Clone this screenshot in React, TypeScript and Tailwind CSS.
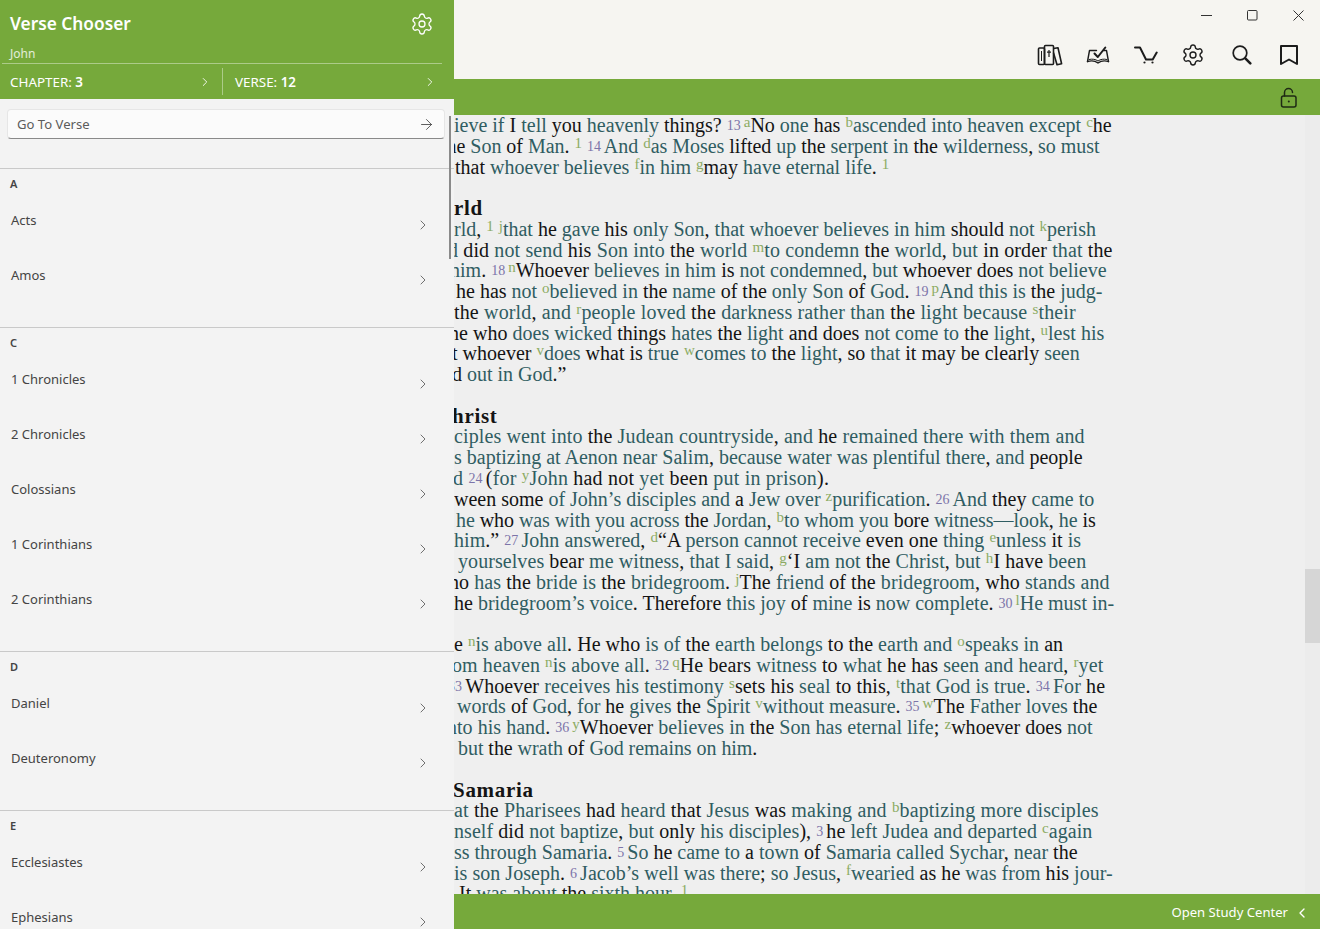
import { Settings, ChevronRight, ChevronLeft, ArrowRight } from "lucide-react";

const ui = "font-['Noto_Sans','Open_Sans',sans-serif]";

const groups = [
  { letter: "A", books: ["Acts", "Amos"] },
  { letter: "C", books: ["1 Chronicles", "2 Chronicles", "Colossians", "1 Corinthians", "2 Corinthians"] },
  { letter: "D", books: ["Daniel", "Deuteronomy"] },
  { letter: "E", books: ["Ecclesiastes", "Ephesians", "Esther"] },
];

// {teal}  ^note-letter  #verse#
const lines: { t: string; c?: string; h?: boolean }[] = [
  { t: "{ieve if} I {tell} you {heavenly} things? #13#^aNo {one} has ^b{ascended into heaven except} ^che" },
  { t: "the{ Son} of {Man}. ^1 #14#{And} ^d{as Moses} lifted {up} the {serpent in} the {wilderness}, {so must}", c: "ml-[-13px] tracking-[-0.03px]" },
  { t: "that {whoever believes} ^f{in him} ^gmay{ have eternal life}. ^1", c: "ml-[1px]" },
  { t: "" },
  { t: "rld", h: true },
  { t: "{rld}, ^1 ^j{that} he {gave} his {only Son}, {that whoever believes in him} should {not} ^k{perish}" },
  { t: "{d} did {not send} his {Son into} the {world} ^m{to condemn} the {world}, {but} in order {that} the", c: "ml-[-6px] tracking-[0.13px]" },
  { t: "{him}. #18#^nWhoever {believes in him} is {not condemned}, {but} whoever does {not believe}", c: "ml-[-4px]" },
  { t: "he has {not} ^o{believed in} the {name} of the {only Son} of {God}. #19#^p{And this is} the {judg-}", c: "ml-[2px]" },
  { t: "the {world}, {and} ^r{people loved} the {darkness rather than} the {light because} ^s{their}", c: "tracking-[0.15px]" },
  { t: "he who {does wicked} things {hates} the {light} and does {not come to} the {light}, ^u{lest his}", c: "ml-[-5px] tracking-[0.02px]" },
  { t: "t whoever ^v{does} what is {true} ^w{comes to} the {light}, so {that} it may be clearly {seen}", c: "ml-[-2px]" },
  { t: "d {out in God}.”", c: "ml-[-2px]" },
  { t: "" },
  { t: "hrist", h: true, c: "ml-[-2px]" },
  { t: "{ciples went into} the {Judean countryside}, {and} he {remained there with them and}", c: "tracking-[0.12px]" },
  { t: "{s baptizing at Aenon near Salim}, {because water was plentiful there}, {and} people" },
  { t: "{d} #24#({for} ^y{John} had not {yet} been {put in prison}).", c: "ml-[-1px] tracking-[0.2px]" },
  { t: "ween some {of John’s disciples and} a {Jew over} ^z{purification}. #26#{And} they {came to}" },
  { t: "{he} who {was with you across} the {Jordan}, ^b{to whom you} bore {witness—look}, {he} is", c: "ml-[2px] tracking-[-0.06px]" },
  { t: "{him}.” #27#{John answered}, ^d“A {person cannot receive} even one {thing} ^e{unless} it {is}", c: "tracking-[0.05px]" },
  { t: "{yourselves} bear {me witness}, {that I said}, ^g‘I {am not} the {Christ}, {but} ^hI have {been}", c: "ml-[4px] tracking-[0.07px]" },
  { t: "ho {has} the {bride is} the {bridegroom}. ^jThe {friend} of the {bridegroom}, who {stands and}", c: "ml-[-5px] tracking-[0.08px]" },
  { t: "he {bridegroom’s voice}. Therefore {this joy} of {mine} is {now complete}. #30#^l{He must in-}" },
  { t: "" },
  { t: "e ^n{is above all}. He who {is of} the {earth belongs} to the {earth and} ^o{speaks in} an", c: "tracking-[0.04px]" },
  { t: "{om heaven} ^n{is above all}. #32#^qHe bears {witness} to {what} he has {seen and heard}, ^r{yet}", c: "ml-[-2px] tracking-[0.09px]" },
  { t: "#33#Whoever {receives his testimony} ^ssets his {seal} to this, ^t{that God is true}. #34#{For} he", c: "ml-[-6px] tracking-[0.09px]" },
  { t: "{words} of {God}, {for} he {gives} the {Spirit} ^v{without measure}. #35#^wThe {Father loves} the", c: "ml-[3px]" },
  { t: "{nto his hand}. #36#^yWhoever {believes in} the {Son has eternal life}; ^zwhoever does {not}", c: "ml-[-7px] tracking-[0.03px]" },
  { t: "{but} the {wrath} of {God remains on him}.", c: "ml-[4px] tracking-[-0.05px]" },
  { t: "" },
  { t: "Samaria", h: true, c: "ml-[-1px]" },
  { t: "{at} the {Pharisees} had {heard} that {Jesus} was {making and} ^b{baptizing more disciples}", c: "tracking-[0.15px]" },
  { t: "{nself} did {not baptize}, {but} only {his disciples}), #3#he {left Judea and departed} ^c{again}", c: "tracking-[0.07px]" },
  { t: "{ss through Samaria}. #5#{So} he {came to} a {town} of {Samaria called Sychar}, {near} the" },
  { t: "{is son Joseph}. #6#{Jacob’s well was there}; {so Jesus}, ^f{wearied} as he {was from} his {jour-}", c: "tracking-[0.03px]" },
  { t: "It {was about} the {sixth hour}. ^1", c: "ml-[5px]" },
];

function Line({ t }: { t: string }) {
  const parts = t.match(/\{[^}]*\}|\^.|#[^#]+#|[^{^#]+/g) ?? [];
  return (
    <>
      {parts.map((p, i) => {
        if (p[0] === "{") return <span key={i} className="text-[#2f5d62]">{p.slice(1, -1)}</span>;
        if (p[0] === "^")
          return (
            <span key={i} className="relative top-[-5px] text-[15px] text-[#8bab62]">
              {p[1]}
            </span>
          );
        if (p[0] === "#")
          return (
            <span key={i} className="relative top-[-2px] mr-[3px] text-[14px] text-[#7c74a9]">
              {p.slice(1, -1)}
            </span>
          );
        return <span key={i}>{p}</span>;
      })}
    </>
  );
}

function BooksIcon() {
  return (
    <svg width="26" height="22" viewBox="0 0 26 22" fill="none" stroke="#1c1c1c" strokeWidth="1.6" strokeLinejoin="round">
      <rect x="1.5" y="4" width="6" height="16.5" rx="1" />
      <rect x="7.5" y="1.5" width="9" height="19" rx="1" />
      <path d="M16.5 4.5l4.5-.8 3.6 16-4.6 1-3.5-12" />
      <path d="M12 6v7M10 8.2h4" strokeWidth="1.2" />
      <path d="M4.5 7v10" strokeWidth="1" />
    </svg>
  );
}

function BookCheckIcon() {
  return (
    <svg width="24" height="18" viewBox="0 0 24 18" fill="none" stroke="#1c1c1c" strokeWidth="1.4" strokeLinejoin="round" strokeLinecap="round">
      <path d="M1.5 15.5L3.500 4.500h7" />
      <path d="M17.500 4.500h3l2 11" />
      <path d="M1.500 15.500c4-1.200 7.500-.8 10.500 1.500 3-2.300 6.500-2.700 10.500-1.500" />
      <path d="M3 13.500c3.500-.8 6.500-.3 9 1.500 2.500-1.800 5.500-2.300 9-1.500" strokeWidth="1" />
      <path d="M8.500 7.500l3.300 3.500 7.500-9.500" strokeWidth="2" />
    </svg>
  );
}

function CartIcon() {
  return (
    <svg width="24" height="18" viewBox="0 0 24 18" fill="none" stroke="#1c1c1c" strokeWidth="2" strokeLinecap="round" strokeLinejoin="round">
      <path d="M1 1.500h5l6 12h6.700l4-7" />
      <circle cx="10.500" cy="16.500" r="1.100" fill="#1c1c1c" stroke="none" />
      <circle cx="18.500" cy="16.500" r="1.100" fill="#1c1c1c" stroke="none" />
    </svg>
  );
}

function SearchIcon() {
  return (
    <svg width="20" height="20" viewBox="0 0 20 20" fill="none" stroke="#1c1c1c" strokeLinecap="round">
      <circle cx="8" cy="8" r="6.800" strokeWidth="1.700" />
      <path d="M13.300 13.300l5 5" strokeWidth="2.600" />
    </svg>
  );
}

function BookmarkIcon() {
  return (
    <svg width="18" height="20" viewBox="0 0 18 20" fill="none" stroke="#1c1c1c" strokeWidth="2" strokeLinejoin="round">
      <path d="M1 1h16v18l-8-4.500L1 19z" />
    </svg>
  );
}

function LockIcon() {
  return (
    <svg width="18" height="21" viewBox="0 0 18 21" fill="none" stroke="#1f2a14" strokeWidth="1.5" strokeLinecap="round">
      <rect x="1.500" y="9" width="14.500" height="11" rx="2" />
      <path d="M4.500 9V5.500a4 4 0 0 1 8 0" />
      <circle cx="8.800" cy="14.500" r="1" fill="#1f2a14" stroke="none" />
    </svg>
  );
}

function BookRow({ name }: { name: string }) {
  return (
    <div className="flex h-[55px] shrink-0 items-start justify-between pl-[11px] pr-[23px] pt-[9px]">
      <span className="text-[13px] leading-[18px] text-[#444]">{name}</span>
      <ChevronRight className="mt-[6px] h-4 w-4 text-[#555]" strokeWidth={1.25} />
    </div>
  );
}

function Sidebar() {
  return (
    <aside className={`relative flex h-full w-[454px] shrink-0 flex-col overflow-hidden bg-[#f3f3f3] ${ui}`}>
      <header className="h-[99px] shrink-0 bg-[#76a93b] text-white">
        <div className="flex h-[47px] items-center justify-between pl-[10px] pr-[20px]">
          <h1 className="text-[17.3px] font-semibold leading-none">Verse Chooser</h1>
          <Settings className="h-[24px] w-[24px]" strokeWidth={1.3} />
        </div>
        <p className="mt-[-2px] h-[18px] pl-[10px] text-[12px] leading-[17px] text-white/80">John</p>
        <div className="ml-[2px] mr-[12px] flex h-[36px] border-t border-white/40">
          <div className="my-[4px] flex w-[221px] items-center justify-between border-r border-white/40 pl-[8px] pr-[10px] pt-[1px] text-[13.4px]">
            <span>
              CHAPTER: <b className="font-semibold">3</b>
            </span>
            <ChevronRight className="h-[14px] w-[14px]" strokeWidth={1.5} />
          </div>
          <div className="my-[4px] flex flex-1 items-center justify-between pl-[12px] pr-[5px] pt-[1px] text-[13.4px]">
            <span>
              VERSE: <b className="font-semibold">12</b>
            </span>
            <ChevronRight className="h-[14px] w-[14px]" strokeWidth={1.5} />
          </div>
        </div>
      </header>
      <div className="ml-[7px] mr-[9px] mt-[10px] flex h-[30px] shrink-0 items-center justify-between rounded-[4px] border border-[#e6e6e6] border-b-[#8a8a8a] bg-[#fbfbfb] pl-[9px] pr-[9px] pt-[1px] text-[13.1px] text-[#5c5c5c]">
        <span>Go To Verse</span>
        <ArrowRight className="h-[17px] w-[17px] text-[#333]" strokeWidth={1.1} />
      </div>
      <div className="mt-[29px]">
        {groups.map((g) => (
          <section key={g.letter} className="border-t border-[#c9c9c9] pb-[15px]">
            <div className="h-[33px] pl-[10px] pt-[7px] text-[11px] font-semibold leading-[16px] text-[#444]">{g.letter}</div>
            <div className="flex flex-col">
              {g.books.map((b) => (
                <BookRow key={b} name={b} />
              ))}
            </div>
          </section>
        ))}
      </div>
      {/* list scrollbar */}
      <div className="absolute left-[449px] top-[116px] h-[143px] w-[2px] bg-[#8a8a8a]" />
    </aside>
  );
}

export default function App() {
  return (
    <div className="flex h-[929px] w-[1320px] overflow-hidden bg-[#f6f5f1]">
      <Sidebar />
      <main className="flex min-w-0 flex-1 flex-col">
        <div className="flex h-[30px] shrink-0 justify-end">
          <div className="flex w-[46px] items-center justify-center">
            <svg width="11" height="11" viewBox="0 0 11 11" stroke="#333" strokeWidth="1"><path d="M0 5.500h11" /></svg>
          </div>
          <div className="flex w-[46px] items-center justify-center">
            <svg width="11" height="11" viewBox="0 0 11 11" fill="none" stroke="#333" strokeWidth="1"><rect x=".5" y=".5" width="9.500" height="9.500" rx="1" /></svg>
          </div>
          <div className="mr-[-1px] flex w-[46px] items-center justify-center">
            <svg width="11" height="11" viewBox="0 0 11 11" stroke="#333" strokeWidth="1"><path d="M.5.500l10 10M10.500.500l-10 10" /></svg>
          </div>
        </div>
        <div className="flex h-[49px] shrink-0 items-center justify-end pr-[8px]">
          <div className="flex w-[49px] justify-center"><BooksIcon /></div>
          <div className="flex w-[48px] justify-center"><BookCheckIcon /></div>
          <div className="flex w-[47px] justify-center"><CartIcon /></div>
          <div className="flex w-[48px] justify-center"><Settings className="h-[24px] w-[24px] text-[#1c1c1c]" strokeWidth={1.4} /></div>
          <div className="flex w-[49px] justify-center"><SearchIcon /></div>
          <div className="flex w-[46px] justify-center"><BookmarkIcon /></div>
        </div>
        <div className="flex h-[36px] shrink-0 items-center justify-end bg-[#76a93b] pr-[22px]">
          <LockIcon />
        </div>
        <div className="flex min-h-0 flex-1 bg-[#efefef]">
          <article className="min-w-0 flex-1 overflow-hidden font-['Liberation_Serif',serif] text-[20px] leading-[20.78px] text-[#141414]">
            {lines.map((l, i) => (
              <div key={i} className={`h-[20.78px] whitespace-pre ${l.h ? "text-[21px] font-bold tracking-[0.7px]" : ""} ${l.c ?? ""}`}>
                {l.h ? l.t : <Line t={l.t} />}
              </div>
            ))}
          </article>
          <div className="w-[15px] shrink-0 bg-[#ececec] pt-[454px]">
            <div className="h-[74px] bg-[#d6d6d6]" />
          </div>
        </div>
        <footer className={`flex h-[35px] shrink-0 items-center justify-end bg-[#76a93b] pr-[10px] pt-[2px] text-[13.1px] text-white ${ui}`}>
          <span>Open Study Center</span>
          <ChevronLeft className="ml-[6px] h-[16px] w-[16px]" strokeWidth={2} />
        </footer>
      </main>
    </div>
  );
}
